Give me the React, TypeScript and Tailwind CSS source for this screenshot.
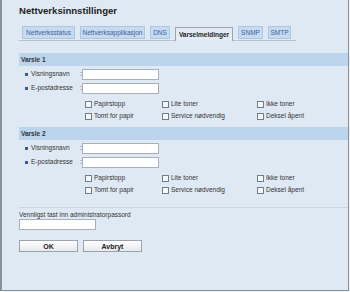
import React from "react";

const tabs = [
  { label: "Nettverksstatus", w: "w-[53px]" },
  { label: "Nettverksapplikasjon", w: "w-[65px]" },
  { label: "DNS", w: "w-[20px]" },
  { label: "Varselmeldinger", w: "w-[58px]", active: true },
  { label: "SNMP", w: "w-[25px]" },
  { label: "SMTP", w: "w-[23px]" },
];

const Checkbox = ({ label, w }: { label: string; w: string }) => (
  <div className={`flex items-center gap-[2px] ${w}`}>
    <span className="w-[7px] h-[7px] border border-[#6f7d8c] bg-[#f5f8fb] shrink-0" />
    <span className="leading-none">{label}</span>
  </div>
);

const FieldRow = ({ label, mt }: { label: string; mt: string }) => (
  <div className={`flex items-center h-[11px] ${mt}`}>
    <span className="w-[3px] h-[3px] bg-[#3a5a8e] ml-[6px] mr-[3px]" />
    <span className="w-[49px] leading-none">{label}</span>
    <span className="w-[2px] leading-none">:</span>
    <div className="w-[77px] h-[11px] border border-[#a9b0b8] bg-white" />
  </div>
);

const Section = ({ title, mt }: { title: string; mt: string }) => (
  <>
    <div className={`h-[13px] bg-[#bcd4ec] flex items-center pl-[2px] font-bold ${mt}`}>
      {title}
    </div>
    <FieldRow label="Visningsnavn" mt="mt-[3px]" />
    <FieldRow label="E-postadresse" mt="mt-[3px]" />
    <div className="flex h-[8px] items-center mt-[6px] pl-[66px]">
      <Checkbox label="Papirstopp" w="w-[77px]" />
      <Checkbox label="Lite toner" w="w-[95px]" />
      <Checkbox label="Ikke toner" w="w-[60px]" />
    </div>
    <div className="flex h-[8px] items-center mt-[4px] pl-[66px]">
      <Checkbox label="Tomt for papir" w="w-[77px]" />
      <Checkbox label="Service nødvendig" w="w-[95px]" />
      <Checkbox label="Deksel åpent" w="w-[60px]" />
    </div>
  </>
);

const App = () => {
  return (
    <div className="w-[350px] h-[292px] bg-[#eef2f6]">
      <div
        className="w-[349px] h-[291px] bg-[#dfe9f4] border-l-2 border-r border-b border-[#8a9099] pl-[17px] pr-[0px] flex flex-col text-[6.5px] text-[#333]"
        style={{ fontFamily: '"Liberation Sans", Arial, sans-serif' }}
      >
        <div className="mt-[5px] h-[12px] text-[9.6px] font-bold text-[#222] leading-[12px]">
          Nettverksinnstillinger
        </div>

        <div className="mt-[10px] h-[14px] w-[277px] border-b border-[#b7c3cf] flex items-end gap-[5px] pl-[3px]">
          {tabs.map((t) =>
            t.active ? (
              <div
                key={t.label}
                className={`${t.w} h-[14px] -mb-px bg-[#e3ecf5] border border-b-0 border-[#9aa6b3] flex items-center justify-center font-bold text-[#222]`}
              >
                {t.label}
              </div>
            ) : (
              <div
                key={t.label}
                className={`${t.w} h-[13px] mb-px bg-[#c5dbf2] border border-[#adc6e1] flex items-center justify-center text-[#3f5f92]`}
              >
                {t.label}
              </div>
            )
          )}
        </div>

        <Section title="Varsle 1" mt="mt-[12px]" />
        <Section title="Varsle 2" mt="mt-[7px]" />

        <div className="mt-[13px] h-px bg-[#c8d4e1]" />
        <div className="mt-[3px] h-[8px] leading-[8px]">
          Vennligst tast inn administratorpassord
        </div>
        <div className="w-[77px] h-[11px] border border-[#a9b0b8] bg-white" />

        <div className="flex gap-[5px] mt-[10px]">
          <button className="w-[59px] h-[12px] border border-[#9aa3ad] bg-gradient-to-b from-white to-[#e6e9ed] font-bold text-[7px] text-[#222] leading-none">
            OK
          </button>
          <button className="w-[59px] h-[12px] border border-[#9aa3ad] bg-gradient-to-b from-white to-[#e6e9ed] font-bold text-[7px] text-[#222] leading-none">
            Avbryt
          </button>
        </div>
      </div>
    </div>
  );
};

export default App;
